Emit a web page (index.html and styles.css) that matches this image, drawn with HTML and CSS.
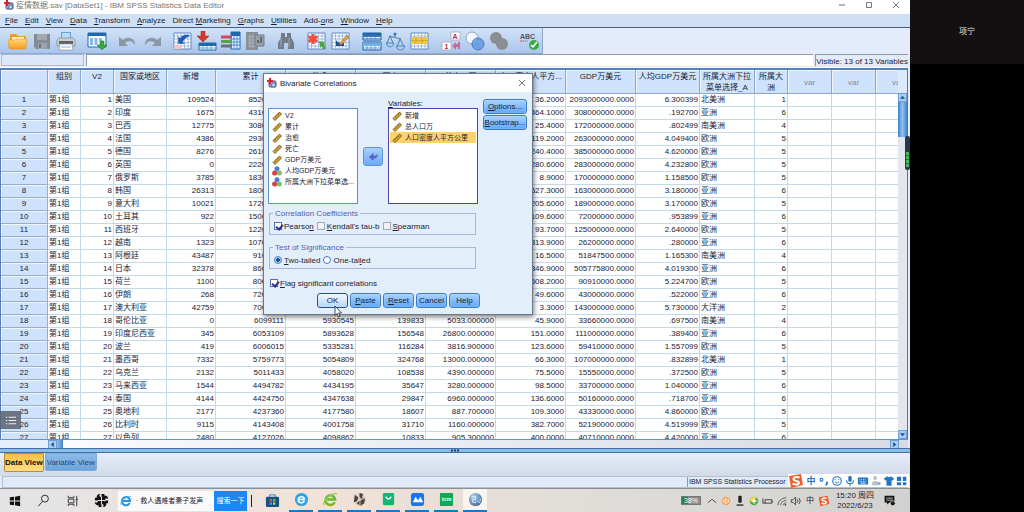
FILE: index.html
```html
<!DOCTYPE html>
<html lang="zh-CN">
<head>
<meta charset="utf-8">
<title>疫情数据.sav [DataSet1] - IBM SPSS Statistics Data Editor</title>
<link rel="stylesheet" href="styles.css">
</head>
<body>
<svg class="defs" aria-hidden="true">
  <defs>
    <linearGradient id="gFolder" x1="0" y1="0" x2="0" y2="1"><stop offset="0" stop-color="#ffd873"/><stop offset="1" stop-color="#f59a22"/></linearGradient>
    <linearGradient id="gBlue" x1="0" y1="0" x2="0" y2="1"><stop offset="0" stop-color="#1c5fa8"/><stop offset="1" stop-color="#7db9ea"/></linearGradient>
    <radialGradient id="gBall" cx=".35" cy=".3" r=".8"><stop offset="0" stop-color="#b9d3ee"/><stop offset="1" stop-color="#2f66a6"/></radialGradient>
    <symbol id="spss" viewBox="0 0 10 10"><rect x="2" y="3" width="7" height="6" rx="1" fill="#8fa9cf" stroke="#3c5488"/><path d="M0 3h6M3 0v6" stroke="#d3242f" stroke-width="2"/><circle cx="6.500" cy="7" r="2" fill="#c8d8ef" stroke="#35508c" stroke-width=".7"/></symbol>
    <symbol id="ruler" viewBox="0 0 10 10"><path d="M1 7.500 7.500 1 9.500 3 3 9.500z" fill="#d9ac38" stroke="#6f5213" stroke-width=".9"/><path d="m3 6 1 1m.5-2.500 1 1M6 3l1 1" stroke="#5d420c" stroke-width=".7"/></symbol>
    <symbol id="balls" viewBox="0 0 10 10"><circle cx="5" cy="2.700" r="2.500" fill="#4a7ed0"/><circle cx="2.600" cy="7" r="2.500" fill="#d8403d"/><circle cx="7.400" cy="7" r="2.500" fill="#77c06d"/></symbol>
    <symbol id="sheet" viewBox="0 0 20 20"><path d="M1 2h17v16H1z" fill="#fff" stroke="#5d87bf"/><path d="M1 5h17M1 8h17M1 11.500h17M1 15h17M4.500 2v16M8 2v16M11.500 2v16M15 2v16" stroke="#8db0dc" stroke-width=".8"/></symbol>
    <symbol id="sogou" viewBox="0 0 16 16"><path d="M1 3 13 1l2 11-12 3z" fill="#f0602b"/><path d="M11.500 4.500C8 3.500 5 4.500 5.500 6.500S11 7.500 11 9.700s-4 2.300-6.500 1" fill="none" stroke="#fff" stroke-width="2"/></symbol>
  </defs>
</svg>

<div class="screen">
  <main class="app">
    <header class="titlebar">
      <svg class="logo"><use href="#spss"/></svg>
      <h1>疫情数据.sav [DataSet1] - IBM SPSS Statistics Data Editor</h1>
      <div class="winbtns">
        <button aria-label="Minimize"><svg viewBox="0 0 8 8"><path d="M1 4h6" stroke="#666"/></svg></button>
        <button aria-label="Maximize"><svg viewBox="0 0 8 8"><path d="M1.500 1.500h5v5h-5z" fill="none" stroke="#777"/></svg></button>
        <button aria-label="Close"><svg viewBox="0 0 8 8"><path d="m1 1 6 6m0-6L1 7" stroke="#777" stroke-width=".9"/></svg></button>
      </div>
    </header>

    <nav class="menu">
      <button><u>F</u>ile</button><button><u>E</u>dit</button><button><u>V</u>iew</button><button><u>D</u>ata</button><button><u>T</u>ransform</button><button><u>A</u>nalyze</button><button>Direct <u>M</u>arketing</button><button><u>G</u>raphs</button><button><u>U</u>tilities</button><button>Add-<u>o</u>ns</button><button><u>W</u>indow</button><button><u>H</u>elp</button>
    </nav>

    <div class="toolrow">
      <div class="toolbar">
        <div class="group">
          <button aria-label="Open"><svg viewBox="0 0 20 20"><path d="M2 17V4q0-1 1-1h5l2 2h7q1 0 1 1v11z" fill="#f09a25"/><path d="M4 6h12v8H4z" fill="#fff3cf"/><path d="M0 9h6l2-1h11l-1 9q0 1-1 1H2q-1 0-1-1z" fill="url(#gFolder)" stroke="#dd8e25" stroke-width=".5"/></svg></button>
          <button aria-label="Save"><svg viewBox="0 0 20 20"><path d="M2 3h16v15H4l-2-2z" fill="#858b92"/><path d="M5 3h10v6H5z" fill="#a4a9af"/><path d="M6 12h9v6H6z" fill="#9da3aa"/><path d="M7 13h2v4H7z" fill="#6d737a"/></svg></button>
          <button aria-label="Print"><svg viewBox="0 0 20 20"><path d="M5 1h10v7H5z" fill="#5ea4da"/><path d="M6 2h8v6H6z" fill="#b8dcf5"/><path d="M3 7h14l2 2v6H1V9z" fill="#c9ced3" stroke="#7f878e" stroke-width=".7"/><path d="M3 10h14v3H3z" fill="#59616a"/><path d="M4 13h12l1 6H3z" fill="#fff" stroke="#8c9399" stroke-width=".7"/><path d="M5 16h10" stroke="#8cb1cd"/></svg></button>
        </div>
        <div class="group"><button aria-label="Recall dialog"><svg viewBox="0 0 20 20"><path d="M1 2h18v14H1z" fill="#f5fbff" stroke="#1f68ae"/><path d="M1 2h18v3H1z" fill="#1f68ae"/><path d="M3 7h3v7H3zM7.500 7h3v7h-3zM12 7h3v3h-3z" fill="#86bbe6"/><path d="M13 10h4v4h3l-5 5-5-5h3z" fill="#39a83c" stroke="#22772a" stroke-width=".5"/></svg></button></div>
        <div class="group">
          <button aria-label="Undo"><svg viewBox="0 0 20 20"><path d="M1 6v9h9l-3-3c3-3 8-2 10 2 1-6-7-10-12-5z" fill="#8d97a3"/></svg></button>
          <button aria-label="Redo"><svg viewBox="0 0 20 20"><path d="M19 6v9h-9l3-3c-3-3-8-2-10 2-1-6 7-10 12-5z" fill="#8d97a3"/></svg></button>
        </div>
        <div class="group">
          <button aria-label="Go to case"><svg viewBox="0 0 20 20"><use href="#sheet"/><path d="M5 5v8h8l-3-2c1-3 4-5 8-6-5-3-9-1-11 2z" fill="#1f5cae" stroke="#cfe2f8" stroke-width=".5"/><path d="M1 14h7v4H1z" fill="#f5c6c9"/></svg></button>
          <button aria-label="Go to variable"><svg viewBox="0 0 20 20"><path d="M2 12h17v7H2z" fill="#fff" stroke="#1f68ae"/><path d="M2 12h17v3H2z" fill="#1f68ae"/><path d="M6 15v4m4-4v4m4-4v4M2 17h17" stroke="#6ea4d8"/><path d="M4 0h4v5h4l-6 6-6-6h4z" fill="#d43a25" stroke="#9e2418" stroke-width=".5"/></svg></button>
          <button aria-label="Variables"><svg viewBox="0 0 20 20"><path d="M10 1h9v17h-9z" fill="#e8f4ff" stroke="#1f68ae"/><path d="M10 1h9v4h-9z" fill="#1f68ae"/><path d="M10 8h9m-9 3h9m-9 3h9M13 5v13m3-13v13" stroke="#4d8ccb"/><path d="M0 6h11" stroke="#cf4668" stroke-width="3"/><path d="M0 10.500h11" stroke="#52a94c" stroke-width="3"/><path d="M0 15h11" stroke="#6c7076" stroke-width="3"/></svg></button>
          <button aria-label="Run descriptives"><svg viewBox="0 0 20 20"><path d="M1 1h12v18H1z" fill="#898f96"/><path d="M3 6h8M3 9h8m-8 3h8m-8 3h8M5 3v14m3-14v14" stroke="#adb3ba"/><path d="M10 4h9v11h-9z" fill="#9ba1a8" stroke="#777d84"/><path d="M13 12V9m3 3V6" stroke="#62686f" stroke-width="2"/></svg></button>
        </div>
        <div class="group"><button aria-label="Find"><svg viewBox="0 0 20 20"><path d="M5 2h4v4h2V2h4v4l3 6v6h-6v-6H8v6H2v-6l3-6z" fill="#737d88"/><path d="M5 7v9m8-9v9" stroke="#a3acb6"/></svg></button></div>
        <div class="group">
          <button aria-label="Insert cases"><svg viewBox="0 0 20 20"><use href="#sheet"/><path d="m6 3 0 10M1.500 5.500l9 5m0-5-9 5" stroke="#ef5138" stroke-width="2.800"/><path d="m12 10 6 1-1 2 2 5h-3l-1-3-2 2z" fill="#45a943"/></svg></button>
          <button aria-label="Insert variable"><svg viewBox="0 0 20 20"><use href="#sheet"/><path d="M5 9q3 4 8 3v3H5z" fill="#254f91"/><path d="m8 13 8-9 2 2-8 8z" fill="#e7a13a" stroke="#8d5b17" stroke-width=".5"/></svg></button>
        </div>
        <div class="group">
          <button aria-label="Split file"><svg viewBox="0 0 20 20"><path d="M1 2h18v7H1zM1 11h18v8H1z" fill="#e8f4ff" stroke="#1b5b9f"/><path d="M1 2h18v4H1zM1 11h18v4H1z" fill="url(#gBlue)"/><path d="M1 7.500h18M1 17h18M5 6v3m4-3v3m4-3v3M5 15v4m4-4v4m4-4v4" stroke="#5391cb" stroke-width=".8"/></svg></button>
          <button aria-label="Weight cases"><svg viewBox="0 0 20 20"><path d="m3 5 12 3M9 2v4M4 5l-3 7m3-7 3 7m7-4-3 8m3-8 4 8" fill="none" stroke="#477fb5"/><circle cx="9" cy="3" r="1.600" fill="#3979b6"/><path d="M0 12h8q-1 4-4 4t-4-4zM10 15h9q-1 4-4.500 4T10 15z" fill="#a9d0f1" stroke="#3979b6" stroke-width=".8"/></svg></button>
          <button aria-label="Select cases"><svg viewBox="0 0 20 20"><use href="#sheet"/><path d="M1 6h17v7H1z" fill="#eec73b"/><path d="M1 9.500h17M6 6v7m6-7v7" stroke="#c79f24" stroke-width=".7"/></svg></button>
        </div>
        <div class="group">
          <button aria-label="Value labels"><svg viewBox="0 0 20 20"><path d="M10 1h9v8h-9zM1 11h9v8H1z" fill="#fff" stroke="#a3a9bd" stroke-width=".8"/><text x="11.500" y="8" class="glyph red">A</text><text x="3.500" y="18" class="glyph red">1</text><path d="M11 15l4-4v2h2v-2h2v7h-2v-2h-2v3z" fill="#c66b9d"/></svg></button>
          <button aria-label="Use sets"><svg viewBox="0 0 20 20"><circle cx="7" cy="7" r="6" fill="#f2f7fd" stroke="#8aa3c0"/><circle cx="13" cy="13" r="6" fill="#5c94e2" fill-opacity=".8" stroke="#4b7cc2"/></svg></button>
          <button aria-label="Show all variables"><svg viewBox="0 0 20 20"><circle cx="7" cy="7" r="6" fill="#8a8d91"/><circle cx="13" cy="13" r="6" fill="#8a8d91"/></svg></button>
        </div>
        <div class="group"><button aria-label="Spell check"><svg viewBox="0 0 20 20"><text x="0" y="8" class="glyph">ABC</text><path d="M0 10h8" stroke="#e0463a" stroke-dasharray="1.500 1"/><circle cx="14" cy="14" r="5" fill="#3fa648"/><path d="m11 14 2 2 4-5" fill="none" stroke="#fff" stroke-width="1.500"/></svg></button></div>
      </div>
    </div>

    <div class="editrow">
      <span class="cellname"></span>
      <input class="cellinput" aria-label="Cell value">
      <span class="visible">Visible: 13 of 13 Variables</span>
    </div>

    <section class="sheet">
      <div class="viewport">
        <table>
          <colgroup><col class="w47"><col class="w33"><col class="w33"><col class="w53"><col class="w49"><col class="w70"><col class="w70"><col class="w70"><col class="w70"><col class="w70"><col class="w70"><col class="w64"><col class="w54"><col class="w33"><col class="w44"><col class="w44"><col class="w44"></colgroup>
          <thead><tr><th></th><th>组别</th><th>V2</th><th>国家或地区</th><th>新增</th><th>累计</th><th>治愈</th><th>死亡</th><th>总人口万</th><th>人口密度人平方...</th><th>GDP万美元</th><th>人均GDP万美元</th><th>所属大洲下拉菜单选择_A</th><th>所属大洲</th><th class="var">var</th><th class="var">var</th><th class="var">var</th></tr></thead>
          <tbody id="cases"></tbody>
        </table>
      </div>
      <div class="vscroll">
        <button aria-label="Scroll up"><svg viewBox="0 0 8 8"><path d="M1 5.500 4 2l3 3.500z" fill="#24518a"/></svg></button>
        <span class="vthumb"></span>
        <button class="end" aria-label="Scroll down"><svg viewBox="0 0 8 8"><path d="M1 2.500 4 6l3-3.500z" fill="#24518a"/></svg></button>
      </div>
    </section>
    <div class="hscroll">
      <button aria-label="Scroll left"><svg viewBox="0 0 8 8"><path d="M5.500 1 2 4l3.500 3z" fill="#24518a"/></svg></button>
      <span class="hthumb"></span>
      <button class="end" aria-label="Scroll right"><svg viewBox="0 0 8 8"><path d="M2.500 1 6 4 2.500 7z" fill="#24518a"/></svg></button>
    </div>
    <div class="splitter"><svg viewBox="0 0 8 3"><path d="M0 1.500h8" stroke="#1f3f66" stroke-width="2" stroke-dasharray="2 1"/></svg></div>

    <div class="tabs">
      <button class="tab active">Data View</button>
      <button class="tab">Variable View</button>
    </div>
    <div class="status"><span></span><span class="proc">IBM SPSS Statistics Processor</span></div>

    <footer class="taskbar">
      <button class="task" aria-label="Start"><svg viewBox="0 0 16 16"><path d="M3 4.500 7.500 4v4H3zM8.500 4 14 3v5H8.500zM3 9h4.500v4L3 12.500zM8.500 9H14v5l-5.500-1z" fill="#111"/></svg></button>
      <button class="task" aria-label="Search"><svg viewBox="0 0 16 16"><circle cx="9.500" cy="6" r="3.700" fill="none" stroke="#222"/><path d="m7 9-4.500 5" stroke="#222"/></svg></button>
      <button class="task" aria-label="Task view"><svg viewBox="0 0 16 16"><path d="M3.500 3v2h6V3M3.500 14v-2h6v2M3.500 6.500h6v4h-6zM12.500 3v3m0 2.500V14" fill="none" stroke="#333"/><path d="M11.500 6h2v2h-2z" fill="#333"/></svg></button>
      <button class="task" aria-label="Pinwheel"><svg viewBox="0 0 16 16"><path d="M7.500 7.500H5A3.500 3.500 0 0 1 5 1h1.500q-2 2 1 3.500zM8.500 7.500V5A3.500 3.500 0 0 1 15 5v1.500q-2-2-3.500 1zM8.500 8.500H11a3.500 3.500 0 0 1 0 6.500H9.500q2-2-1-3.500zM7.500 8.500V11A3.500 3.500 0 0 1 1 11V9.500q2 2 3.500-1zM8 1h3v3H8zM12 8h3v3h-3zM5 12h3v3H5zM1 5h3v3H1z" fill="#111"/></svg></button>
      <form class="search">
        <svg viewBox="0 0 16 16"><path d="M13 10.500A5.500 5.500 0 1 1 13.500 8H4" fill="none" stroke="#2c8fe0" stroke-width="2.600"/><path d="M1 13C0 9 9 1 14.500 2" fill="none" stroke="#58b2ee" stroke-width="1.200"/></svg>
        <input aria-label="搜索" value="· 救人遇难者妻子发声">
        <button type="button">搜索一下</button>
      </form>
      <span class="divider"></span>
      <div class="pinned">
        <button class="task" aria-label="Store"><svg viewBox="0 0 16 16"><path d="M5 4V2h6v2" fill="none" stroke="#2a81c5"/><rect x="1" y="4" width="14" height="11" rx="1.500" fill="#155184"/><path d="M5 6.500h2.500V9H5z" fill="#ef5a36"/><path d="M8.500 6.500H11V9H8.500z" fill="#86bd3b"/><path d="M5 10h2.500v2.500H5z" fill="#35a9e5"/><path d="M8.500 10H11v2.500H8.500z" fill="#f5bd32"/></svg></button>
        <button class="task run" aria-label="Browser"><svg viewBox="0 0 16 16"><circle cx="8" cy="8" r="7" fill="#27a5e8"/><path d="M4.500 8H11c0-4-6-4-6.500 0s5 4.500 6.500 1.500" fill="none" stroke="#fff" stroke-width="1.700"/></svg></button>
        <button class="task run" aria-label="360 browser"><svg viewBox="0 0 16 16"><path d="M12.500 11A5.200 5.200 0 1 1 13 8H4.500" fill="none" stroke="#6cbb2f" stroke-width="2.600"/><path d="M1 14C-.5 9 10 0 15 2" fill="none" stroke="#94cf48" stroke-width="1.400"/></svg></button>
        <button class="task run" aria-label="Photo"><svg viewBox="0 0 16 16"><circle cx="8" cy="8" r="7" fill="#ddd6cf"/><path d="M3 3l4 3-2 4-3 1zM8 1l4 1-2 5-2-2zM9 9l5-2-1 5-4 3zM5 12l3-3v5z" fill="#4a4142"/><path d="M8 7l4-2v3z" fill="#ab6a56"/></svg></button>
        <button class="task run" aria-label="Store bag"><svg viewBox="0 0 16 16"><rect x="2" y="1" width="12" height="13" rx="1.500" fill="#15b778"/><path d="M5 5q3 5 6 0" fill="none" stroke="#fff" stroke-width="1.300"/></svg></button>
        <button class="task run" aria-label="Meeting"><svg viewBox="0 0 16 16"><rect x="1" y="1" width="14" height="14" rx="2.500" fill="#1576f0"/><path d="M3 11 6 5l2.500 4L11 5l3 6z" fill="#fff"/></svg></button>
        <button class="task run" aria-label="icm"><svg viewBox="0 0 16 16"><rect x="1" y="1" width="14" height="14" rx="1" fill="#0caa56"/><text x="3" y="10" class="glyph white">icm</text></svg></button>
        <button class="task run current" aria-label="SPSS"><svg viewBox="0 0 16 16"><circle cx="8" cy="8" r="7" fill="url(#gBall)"/><path d="M4 5h4v3H5v3h4M10 9l3 3m0-5v3" fill="none" stroke="#e0ecf8"/></svg></button>
      </div>
      <div class="tray">
        <span class="battery">38%</span>
        <svg viewBox="0 0 14 14"><path d="m2 9 5-4 5 4" fill="none" stroke="#333"/></svg>
        <svg viewBox="0 0 14 14"><circle cx="7" cy="7" r="5" fill="#f4a25c"/><path d="M4 6h1l2-2v6L5 8H4zM9 5q2 2 0 4" stroke="#fff" fill="none"/></svg>
        <svg viewBox="0 0 14 14"><rect x="5" y="1" width="4" height="8" rx="1" fill="#222"/><path d="M3 11h8v1.500H3z" fill="#222"/></svg>
        <svg viewBox="0 0 14 14"><circle cx="7" cy="7" r="5" fill="#51b037"/><path d="M2 7a5 5 0 0 1 8-4L7 6z" fill="#f6d534"/><path d="M7 4v6M4 7h6" stroke="#fff" stroke-width="1.500"/></svg>
        <svg viewBox="0 0 14 14"><path d="M3.500 5.500h8v4h-8zM12 6.500v2M1 4v5.500h3" fill="none" stroke="#333"/></svg>
        <svg viewBox="0 0 14 14"><path d="M2 12Q3 4 12 3M5 12q1-5 7-6M8 12q1-3 4-3" fill="none" stroke="#555"/><circle cx="11" cy="11.500" r="1" fill="#333"/></svg>
        <svg viewBox="0 0 14 14"><path d="M1.500 5.500h2l3-3v9l-3-3h-2zM8.500 5q1.500 2 0 4M10.500 3.500q3 3.500 0 7" fill="none" stroke="#333"/></svg>
        <span class="ime">中</span>
        <svg viewBox="0 0 16 16"><use href="#sogou"/></svg>
      </div>
      <time class="clock">15:20 周四<br>2022/6/23</time>
      <button class="notice" aria-label="Notifications"><svg viewBox="0 0 16 16"><path d="M2 2h12v8.500H8L5 13v-2.500H2z" fill="#151515"/><path d="M4 5h8M4 7.500h8" stroke="#ddd"/><circle cx="12" cy="11.500" r="3" fill="#151515" stroke="#ddd" stroke-width=".8"/></svg></button>
    </footer>

    <div class="imebar">
      <svg class="simg"><use href="#sogou"/></svg>
      <b>中</b>
      <svg viewBox="0 0 14 14"><circle cx="4" cy="5.500" r="1.700" fill="none" stroke="#2376c6" stroke-width="1.300"/><path d="M10 8q1.500 2-1 4" fill="none" stroke="#2376c6" stroke-width="2"/></svg>
      <svg viewBox="0 0 14 14"><circle cx="7" cy="7" r="5" fill="none" stroke="#2376c6" stroke-width="1.300"/><path d="M5 4.500v1.500m4-1.500v1.500M4.500 8q2.500 3 5 0" fill="none" stroke="#2376c6"/></svg>
      <svg viewBox="0 0 14 14"><rect x="5" y="1" width="4" height="7" rx="2" fill="#2376c6"/><path d="M3 6q0 4 4 4t4-4M7 10v3" fill="none" stroke="#2376c6" stroke-width="1.200"/></svg>
      <svg viewBox="0 0 14 14"><rect x="1" y="3" width="12" height="8" rx="1" fill="#2376c6"/><path d="M3 5.500h8M3 7.500h8" stroke="#fff" stroke-dasharray="1 1"/><path d="M4 9.500h6" stroke="#fff"/></svg>
      <svg viewBox="0 0 14 14"><circle cx="6" cy="3.500" r="2.300" fill="#b5c2cf"/><path d="M2 12q0-5 4-5t4 5z" fill="#b5c2cf"/><circle cx="10.500" cy="10" r="2" fill="#9db0c2"/></svg>
      <svg viewBox="0 0 14 14"><path d="M1 4 5 1.500q2 2 4 0L13 4l-1.500 2.500L10 6v6.500H4V6l-1.500.5z" fill="#2376c6"/></svg>
      <svg viewBox="0 0 14 14"><path d="M1 2h5v5H1zM8 2h4v5H8zM1 8.500h5V12H1zM8 8.500h4V12H8z" fill="#2376c6"/></svg>
    </div>
    <div class="meter"><i></i></div>
    <button class="drawer" aria-label="List"><svg viewBox="0 0 14 14"><path d="M5 3.500h8M5 7h8M5 10.500h8" stroke="#eee" stroke-width="1.300"/><path d="M2 3.500h1.500M2 7h1.500M2 10.500h1.500" stroke="#eee" stroke-width="1.300"/></svg></button>

    <div class="dialog" role="dialog" aria-labelledby="dlgTitle">
      <div class="dlghead">
        <svg class="logo"><use href="#spss"/></svg>
        <h2 id="dlgTitle">Bivariate Correlations</h2>
        <button aria-label="Close"><svg viewBox="0 0 8 8"><path d="m1 1 6 6m0-6L1 7" stroke="#666" stroke-width=".9"/></svg></button>
      </div>
      <div class="dlgbody">
        <div class="pick">
          <ul class="list source">
            <li><svg><use href="#ruler"/></svg>V2</li>
            <li><svg><use href="#ruler"/></svg>累计</li>
            <li><svg><use href="#ruler"/></svg>治愈</li>
            <li><svg><use href="#ruler"/></svg>死亡</li>
            <li><svg><use href="#ruler"/></svg>GDP万美元</li>
            <li><svg><use href="#balls"/></svg>人均GDP万美元</li>
            <li><svg><use href="#balls"/></svg>所属大洲下拉菜单选...</li>
          </ul>
          <button class="move" aria-label="Move left"><svg viewBox="0 0 12 12"><path d="M1 6.500 6 2v3q4 1 4-3 2 6-4 6.500V11z" fill="#5b62c8"/></svg></button>
          <div class="chosen">
            <span class="caption"><u>V</u>ariables:</span>
            <ul class="list target">
              <li><svg><use href="#ruler"/></svg>新增</li>
              <li><svg><use href="#ruler"/></svg>总人口万</li>
              <li class="selected"><svg><use href="#ruler"/></svg>人口密度人平方公里</li>
            </ul>
          </div>
          <div class="side"><button class="btn"><u>O</u>ptions...</button><button class="btn"><u>B</u>ootstrap...</button></div>
        </div>
        <fieldset>
          <legend>Correlation Coefficients</legend>
          <label><input type="checkbox" checked><span>Pearso<u>n</u></span></label>
          <label><input type="checkbox"><span><u>K</u>endall's tau-b</span></label>
          <label><input type="checkbox"><span><u>S</u>pearman</span></label>
        </fieldset>
        <fieldset class="second">
          <legend>Test of Significance</legend>
          <label><input type="radio" name="tail" checked><span><u>T</u>wo-tailed</span></label>
          <label><input type="radio" name="tail"><span>One-tai<u>l</u>ed</span></label>
        </fieldset>
        <label class="flag"><input type="checkbox" checked><span><u>F</u>lag significant correlations</span></label>
        <div class="actions">
          <button class="btn ok">OK</button><button class="btn"><u>P</u>aste</button><button class="btn"><u>R</u>eset</button><button class="btn">Cancel</button><button class="btn">Help</button>
        </div>
      </div>
      <svg class="cursor" viewBox="0 0 8 12"><path d="M1 0v9.500l2-2 1.500 3.500 1.500-.6L4.600 7H7.500z" fill="#fff" stroke="#222" stroke-width=".8"/></svg>
    </div>
  </main>

  <aside class="meeting"><div class="person">项宁</div></aside>
</div>
<script src="data.js"></script>
</body>
</html>
```
FILE: styles.css
```css
* { box-sizing: border-box; }
body {
  margin: 0;
  font: 8px/11px "Liberation Sans", "Noto Sans CJK SC", sans-serif;
  color: #1c2230;
  background: #000;
}
button, input { font: inherit; color: inherit; margin: 0; padding: 0; border: 0; background: none; }
button svg { display: block; }
u { text-underline-offset: 1px; }
.defs { position: absolute; width: 0; height: 0; }
.glyph { font: bold 7px "Liberation Sans", sans-serif; fill: #555; }
.glyph.red { fill: #c81e50; }
.glyph.white { font-size: 6px; fill: #fff; }
.logo { width: 10px; height: 10px; flex: none; }

.screen { display: grid; grid-template-columns: 1fr 114px; height: 100vh; }
.app { position: relative; display: flex; flex-direction: column; min-width: 0; min-height: 0; background: #e4ecfb; overflow: hidden; }

.titlebar { display: flex; height: 14px; flex: none; padding-left: 4px; gap: 2px; background: #fff; }
.titlebar h1 { margin: 0; flex: 1; font-size: 8px; line-height: 11px; font-weight: 400; color: #777; }
.winbtns { display: flex; gap: 19px; padding: 1px 10px 0 0; }
.winbtns svg { width: 8px; height: 8px; }
.winbtns button { height: 8px; }

.menu { display: flex; gap: 7px; flex: none; height: 14px; padding-left: 5px; background: #cfe0f4; border-bottom: 1px solid #4a5f80; }

.toolrow { display: flex; flex: none; height: 26px; }
.toolbar { display: flex; align-items: center; gap: 11px; padding: 0 2px 0 8px; background: linear-gradient(#d3e3f8, #a9c5ea); border-right: 1px solid #8fa9cc; border-bottom: 1px solid #8fa9cc; }
.group { display: flex; gap: 4px; }
.group svg { width: 20px; height: 20px; }

.editrow { display: flex; flex: none; gap: 2px; height: 14px; padding: 0 2px 1px 1px; border-bottom: 1px solid #fff; }
.cellname { width: 83px; background: #dce8fa; border: 1px solid #a9bbd6; }
.cellinput { flex: 1; min-width: 0; background: #fff; border-top: 1px solid #8e99ac; border-left: 1px solid #8e99ac; }
.visible { padding: 1px 0 0; border-left: 1px solid #8e99ac; border-top: 1px solid #8e99ac; white-space: nowrap; }

.sheet { display: flex; flex: 1; min-height: 0; border-top: 2px solid #5481b8; border-left: 1px solid #5481b8; margin-right: 2px; border-right: 1px solid #3f7cb8; }
.viewport { flex: 1; min-width: 0; overflow: hidden; background: #fff; }
table { table-layout: fixed; width: 0; border-collapse: separate; border-spacing: 0; }
.w33 { width: 33px; } .w44 { width: 44px; } .w47 { width: 47px; } .w49 { width: 49px; } .w53 { width: 53px; }
.w54 { width: 55px; } .w64 { width: 64px; } .w70 { width: 70px; }
th, td { padding: 0 1px; height: 13px; line-height: 12px; font-weight: 400; overflow: hidden; white-space: nowrap; }
td { text-align: right; border-right: 1px solid #c3dbe8; border-bottom: 1px solid #c3dbe8; }
td.txt { text-align: left; }
thead th { height: 24px; vertical-align: top; line-height: 11px; padding: 1px 2px 0; white-space: normal; background: #cfe2fb; border-right: 1px solid #8fa7c6; border-bottom: 1px solid #8fa7c6; box-shadow: inset 1px 1px #f0f6ff; }
thead th.var { vertical-align: middle; color: #7c8ba3; }
tbody th { background: #cfe2fb; border-right: 1px solid #98adca; border-bottom: 1px solid #98adca; box-shadow: inset 1px 1px #eef5ff; }

.vscroll { display: flex; flex-direction: column; width: 9px; padding-top: 23px; background: linear-gradient(#dbe9fb 0 23px, #e4e6ee 23px); }
.vscroll button, .hscroll button { flex: none; width: 9px; height: 9px; background: #a9cdf5; border: 1px solid #6f9fd2; }
.vscroll svg, .hscroll svg { width: 7px; height: 7px; }
.vthumb { height: 35px; background: linear-gradient(90deg, #3f82cb, #8fc0f0, #3f82cb); }
.vscroll .end { margin-top: auto; }
.hscroll { display: flex; flex: none; height: 9px; margin-right: 2px; padding: 0 9px 0 48px; background: linear-gradient(90deg, #e4effb 48px, #fbfbfd 48px, #d8dbe4); border-top: 1px solid #5f95cc; }
.hthumb { width: 6px; background: linear-gradient(90deg, #8fc0f0, #3f82cb); }
.hscroll .end { margin-left: auto; }
.splitter { display: flex; justify-content: center; align-items: center; flex: none; height: 5px; background: #86bdea; border-top: 1px solid #456f9f; border-bottom: 1px solid #456f9f; }
.splitter svg { width: 8px; height: 3px; }

.tabs { display: flex; align-items: flex-start; gap: 1px; flex: none; height: 23px; padding: 0 4px; background: linear-gradient(#e6effc, #d3d9e6); }
.tab { height: 18px; padding: 0 1px; color: #2b466f; background: linear-gradient(#8dbbe8, #6ca5dc); border: 1px solid #83abd8; border-radius: 0 0 2px 2px; }
.tab.active { height: 19px; color: #111; font-weight: 700; padding: 0; background: linear-gradient(#f9bf45, #ffdf85); border-color: #b88b35; }
.status { display: flex; flex: none; height: 12px; margin: 0 2px; background: #e0eaf9; border: 1px solid #b3bfd2; }
.status > span:first-child { flex: 1; }
.status .proc { width: 220px; padding-left: 1px; font-size: 7px; line-height: 10px; border-left: 1px solid #8e99ac; }

.taskbar { display: flex; flex: none; align-items: center; height: 24px; padding-left: 2px; background: linear-gradient(90deg, #e3e4e6, #f1e2d8 35%, #dddcd8 70%, #d3d1cf); border-top: 1px solid #8b8e92; }
.task { display: flex; justify-content: center; align-items: center; width: 24px; height: 23px; margin-right: 5px; }
.task svg { width: 15px; height: 15px; }
.search { display: flex; align-items: center; width: 129px; height: 20px; padding-left: 2px; margin-right: 4px; background: #fafafa; }
.search svg { width: 12px; height: 12px; flex: none; }
.search input { flex: 1; min-width: 0; margin-left: 4px; font-size: 7px; }
.search button { width: 33px; height: 20px; color: #fff; background: #1787fb; font-size: 7px; }
.divider { width: 1px; height: 12px; margin-right: 8px; background: #222; }
.pinned { display: flex; gap: 5px; }
.pinned .task { margin: 0; }
.run { border-bottom: 2px solid #1878c8; }
.current { background: #f8f4f0; }
.tray { display: flex; align-items: center; gap: 2px; margin-left: auto; }
.tray svg { width: 12px; height: 12px; }
.battery { width: 20px; height: 9px; margin-right: 3px; font-size: 7px; line-height: 7px; text-align: center; color: #fff; border: 1px solid #777; background: linear-gradient(90deg, #2c8050 35%, #8b8e8d 35%); }
.ime { width: 12px; text-align: center; }
.clock { width: 50px; line-height: 10px; text-align: center; }
.notice { width: 30px; padding-left: 3px; }
.notice svg { width: 13px; height: 13px; }

.imebar { position: absolute; right: 1px; bottom: 25px; display: flex; align-items: center; gap: 1px; height: 13px; padding-right: 1px; background: #fff; color: #2376c6; }
.imebar svg, .imebar b { width: 12px; height: 12px; text-align: center; line-height: 12px; font-size: 9px; }
.imebar .simg { width: 16px; height: 16px; }
.meter { position: absolute; right: 0; top: 136px; width: 5px; height: 34px; padding: 16px 1px 2px; background: #26384b; border-radius: 2px; }
.meter i { display: block; height: 15px; background: repeating-linear-gradient(#43b85b 0 3px, #1f7537 3px 4px); }
.drawer { position: absolute; left: 0; bottom: 83px; width: 21px; height: 18px; padding-left: 4px; background: rgba(90, 98, 110, .85); }
.drawer svg { width: 13px; height: 13px; }

.dialog { position: absolute; left: 263px; top: 73px; width: 270px; background: #e3eefb; border: 1px solid #69788c; box-shadow: 1px 2px 5px rgba(0, 0, 0, .5); }
.dlghead { display: flex; align-items: center; gap: 3px; height: 18px; padding: 0 6px 0 3px; background: #fff; }
.dlghead h2 { flex: 1; margin: 0; font-size: 8px; font-weight: 400; }
.dlghead button svg { width: 8px; height: 8px; }
.dlgbody { padding: 7px 5px 6px 4px; }
.pick { display: grid; grid-template-columns: 90px 20px 90px 44px; justify-content: space-between; }
.list { height: 96px; margin: 0; padding: 1px; list-style: none; background: #fff; border: 1px solid #5a92cc; font-size: 7px; overflow: hidden; }
.list li { display: flex; align-items: center; gap: 3px; height: 11px; padding-left: 2px; line-height: 11px; white-space: nowrap; }
.list svg { width: 10px; height: 10px; flex: none; }
.source { margin-top: 9px; }
.target { border-color: #4a4aa5; }
.list .selected { background: #fbd36d; }
.caption { display: block; height: 9px; line-height: 9px; }
.move { align-self: center; width: 20px; height: 19px; margin-top: 10px; padding-left: 4px; border-radius: 3px; border: 1px solid #5b95d8; background: linear-gradient(#a8d0fb, #6cabf4); }
.move svg { width: 11px; height: 11px; }
.btn { height: 15px; padding: 0; line-height: 12px; border: 1px solid #3d7cc4; border-radius: 3px; background: linear-gradient(#a9d2fd, #5fa8f8); box-shadow: inset 0 0 1px #fff; white-space: nowrap; }
.side { display: flex; flex-direction: column; gap: 1px; }
fieldset { display: flex; align-items: center; gap: 3px; width: 207px; height: 26px; margin: 5px 0 0 1px; padding: 0 4px; border: 1px solid #a3bad8; }
legend { padding: 0 2px; margin-left: -1px; line-height: 9px; color: #5560b0; }
fieldset.second { margin-top: 8px; }
label { display: flex; align-items: center; gap: 2px; }
input[type="checkbox"] { width: 8px; height: 8px; appearance: none; border: 1px solid #a4aab4; background: #f0f2f4; }
input[type="checkbox"]:checked { border-color: #5a70a8; background: #fff; }
input[type="checkbox"]:checked::before { content: ""; display: block; width: 3px; height: 5px; margin-left: 2px; border: solid #2c3190; border-width: 0 2px 2px 0; transform: rotate(40deg); }
input[type="radio"] { width: 8px; height: 8px; appearance: none; border: 1px solid #4f7db5; border-radius: 50%; background: #f6fafe; }
input[type="radio"]:checked { background: radial-gradient(#1d4f9b 40%, #b4d4f5 50%); }
.flag { height: 12px; margin: 8px 0 0 2px; }
.actions { display: flex; gap: 2px; margin: 4px 0 0 49px; }
.actions .btn { width: 31px; }
.actions .ok { border: 1px solid #284f92; background: linear-gradient(#f2f8ff, #b5d6fa); }
.cursor { position: absolute; left: 70px; top: 232px; width: 8px; height: 12px; }

.meeting { background: #000; }
.person { height: 64px; line-height: 64px; text-align: center; color: #e6e6e6; background: #121011; }
```
FILE: data.js
```javascript
// country, new cases, total, recovered, deaths, population, density, GDP, GDP per head, continent, continent code
const cases = `美国|109524|85200000||||36.2000|2093000000.0000|6.300399|北美洲|1
印度|1675|43100000||||464.1000|308000000.0000|.192700|亚洲|6
巴西|12775|30800000||||25.4000|172000000.0000|.802499|南美洲|4
法国|4386|29300000||||119.2000|263000000.0000|4.049400|欧洲|5
德国|8276|26100000||||240.4000|385000000.0000|4.620000|欧洲|5
英国|0|22200000||||280.6000|283000000.0000|4.232800|欧洲|5
俄罗斯|3785|18300000||||8.9000|170000000.0000|1.158500|欧洲|5
韩国|26313|18000000||||527.3000|163000000.0000|3.180000|亚洲|6
意大利|10021|17200000||||205.6000|189000000.0000|3.170000|欧洲|5
土耳其|922|15000000||||109.6000|72000000.0000|.953899|亚洲|6
西班牙|0|12200000||||93.7000|125000000.0000|2.640000|欧洲|5
越南|1323|10700000||||313.9000|26200000.0000|.280000|亚洲|6
阿根廷|43487|9100000||||16.5000|51847500.0000|1.165300|南美洲|4
日本|32378|8600000||||346.9000|505775800.0000|4.019300|亚洲|6
荷兰|1100|8000000||||508.2000|90910000.0000|5.224700|欧洲|5
伊朗|268|7200000||||49.6000|43000000.0000|.522000|亚洲|6
澳大利亚|42759|7000000||||3.3000|143000000.0000|5.730000|大洋洲|2
哥伦比亚|0|6099111|5930545|139833|5033.000000|45.9000|33660000.0000|.697500|南美洲|4
印度尼西亚|345|6053109|5893628|156548|26800.000000|151.0000|111000000.0000|.389400|亚洲|6
波兰|419|6006015|5335281|116284|3816.900000|123.6000|59410000.0000|1.557099|欧洲|5
墨西哥|7332|5759773|5054809|324768|13000.000000|66.3000|107000000.0000|.832899|北美洲|1
乌克兰|2132|5011433|4058020|108538|4390.000000|75.5000|15550000.0000|.372500|欧洲|5
马来西亚|1544|4494782|4434195|35647|3280.000000|98.5000|33700000.0000|1.040000|亚洲|6
泰国|4144|4424750|4347638|29847|6960.000000|136.6000|50160000.0000|.718700|亚洲|6
奥地利|2177|4237360|4177580|18607|887.700000|109.3000|43330000.0000|4.860000|欧洲|5
比利时|9115|4143408|4001758|31710|1160.000000|382.7000|52190000.0000|4.519999|欧洲|5
以色列|2480|4127026|4098862|10833|905.300000|400.0000|40710000.0000|4.420000|亚洲|6`.split("\n");

const body = document.getElementById("cases");
cases.forEach((line, i) => {
  const row = body.insertRow();
  const head = document.createElement("th");
  head.scope = "row";
  head.textContent = i + 1;
  row.append(head);
  const [country, ...rest] = line.split("|");
  ["第1组", String(i + 1), country, ...rest, "", "", ""].forEach((value, c) => {
    const cell = row.insertCell();
    cell.textContent = value;
    if (c === 0 || c === 2 || c === 11) cell.className = "txt";
  });
});
```
